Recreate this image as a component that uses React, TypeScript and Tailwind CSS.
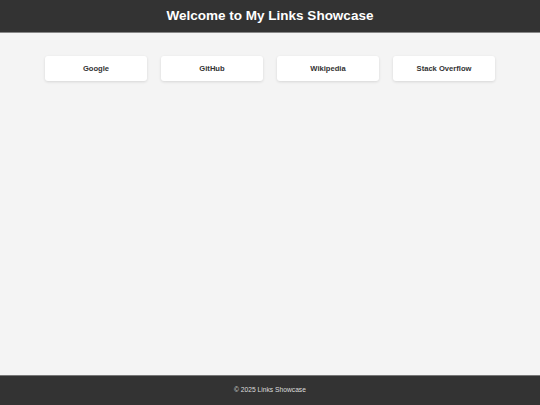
import React from 'react';

const links = [
  { name: 'Google', url: 'https://www.google.com' },
  { name: 'GitHub', url: 'https://github.com' },
  { name: 'Wikipedia', url: 'https://www.wikipedia.org' },
  { name: 'Stack Overflow', url: 'https://stackoverflow.com' },
];

export default function App() {
  return (
    <div className="min-h-screen flex flex-col bg-[#f4f4f4] font-['Liberation_Sans',Arial,sans-serif]">
      {/* Header */}
      <header className="h-[33px] bg-[#333] text-white flex items-center justify-center border-b border-[#888]">
        <h1 className="text-[13.5px] font-bold">Welcome to My Links Showcase</h1>
      </header>

      {/* Links */}
      <main className="flex-1 pt-[23px]">
        <div className="flex justify-center gap-[14px]">
          {links.map((link) => (
            <a
              key={link.name}
              href={link.url}
              className="w-[102px] h-[25px] bg-white rounded-[3px] shadow-[0_1px_3px_rgba(0,0,0,0.12)] flex items-center justify-center text-[7.6px] font-bold text-[#333]"
            >
              {link.name}
            </a>
          ))}
        </div>
      </main>

      {/* Footer */}
      <footer className="h-[30px] bg-[#333] text-[#ddd] flex items-center justify-center border-t border-[#777]">
        <p className="text-[6.7px]">© 2025 Links Showcase</p>
      </footer>
    </div>
  );
}
